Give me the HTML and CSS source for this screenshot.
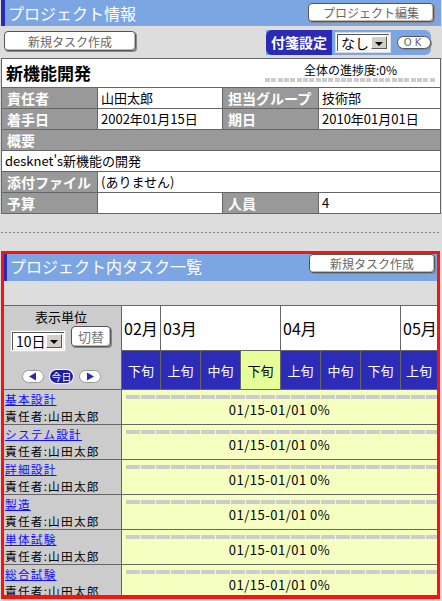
FILE: index.html
```html
<!DOCTYPE html>
<html lang="ja">
<head>
<meta charset="utf-8">
<title>プロジェクト情報</title>
<link rel="stylesheet" href="styles.css">
</head>
<body>
<div class="page">
  <div class="bar">
    <h1 class="bar-title">プロジェクト情報</h1>
    <button class="btn btn-head">プロジェクト編集</button>
  </div>
  <div class="toolbar">
    <button class="btn btn-new">新規タスク作成</button>
    <div class="sticky">
      <span class="sticky-label">付箋設定</span>
      <span class="select select-sticky"><span class="select-text">なし</span><span class="select-arrow"></span></span>
      <button class="btn-ok">OK</button>
    </div>
  </div>
  <div class="info">
    <div class="info-title">
      <span class="project-name">新機能開発</span>
      <div class="progress">
        <span class="progress-text">全体の進捗度:0%</span>
        <span class="progress-bar"></span>
      </div>
    </div>
    <div class="label">責任者</div><div class="value">山田太郎</div>
    <div class="label">担当グループ</div><div class="value">技術部</div>
    <div class="label">着手日</div><div class="value">2002年01月15日</div>
    <div class="label">期日</div><div class="value">2010年01月01日</div>
    <div class="label full">概要</div>
    <div class="value full">desknet's新機能の開発</div>
    <div class="label">添付ファイル</div><div class="value wide">(ありません)</div>
    <div class="label">予算</div><div class="value"></div>
    <div class="label">人員</div><div class="value">4</div>
  </div>
  <div class="divider"></div>
  <section class="tasks">
    <div class="bar bar-tasks">
      <h2 class="bar-title">プロジェクト内タスク一覧</h2>
      <button class="btn btn-head btn-head-tasks">新規タスク作成</button>
    </div>
    <div class="tasks-gap"></div>
    <div class="gantt">
      <div class="unit-cell">
        <div class="unit-label">表示単位</div>
        <div class="unit-controls">
          <span class="select select-unit"><span class="select-text">10日</span><span class="select-arrow"></span></span>
          <button class="btn btn-switch">切替</button>
        </div>
        <div class="nav">
          <span class="nav-btn"><svg width="22" height="13" viewBox="0 0 22 13"><rect x="0.5" y="0.5" width="21" height="12" rx="6" fill="#fff" stroke="#999"/><polygon points="7,6.5 14,2.5 14,10.5" fill="#2a2ab4"/></svg></span>
          <span class="nav-today">今日</span>
          <span class="nav-btn"><svg width="22" height="13" viewBox="0 0 22 13"><rect x="0.5" y="0.5" width="21" height="12" rx="6" fill="#fff" stroke="#999"/><polygon points="15,6.5 8,2.5 8,10.5" fill="#2a2ab4"/></svg></span>
        </div>
      </div>
      <div class="month m-feb">02月</div>
      <div class="month m-mar">03月</div>
      <div class="month m-apr">04月</div>
      <div class="month m-may">05月</div>
      <div class="dec">下旬</div>
      <div class="dec">上旬</div>
      <div class="dec">中旬</div>
      <div class="dec dec-now">下旬</div>
      <div class="dec">上旬</div>
      <div class="dec">中旬</div>
      <div class="dec">下旬</div>
      <div class="dec">上旬</div>

      <div class="task-name"><a href="#">基本設計</a><span>責任者:山田太郎</span></div>
      <div class="task-bar"><span class="dashes"></span><span class="task-date">01/15-01/01 0%</span></div>
      <div class="task-name"><a href="#">システム設計</a><span>責任者:山田太郎</span></div>
      <div class="task-bar"><span class="dashes"></span><span class="task-date">01/15-01/01 0%</span></div>
      <div class="task-name"><a href="#">詳細設計</a><span>責任者:山田太郎</span></div>
      <div class="task-bar"><span class="dashes"></span><span class="task-date">01/15-01/01 0%</span></div>
      <div class="task-name"><a href="#">製造</a><span>責任者:山田太郎</span></div>
      <div class="task-bar"><span class="dashes"></span><span class="task-date">01/15-01/01 0%</span></div>
      <div class="task-name"><a href="#">単体試験</a><span>責任者:山田太郎</span></div>
      <div class="task-bar"><span class="dashes"></span><span class="task-date">01/15-01/01 0%</span></div>
      <div class="task-name"><a href="#">総合試験</a><span>責任者:山田太郎</span></div>
      <div class="task-bar"><span class="dashes"></span><span class="task-date">01/15-01/01 0%</span></div>
    </div>
  </section>
</div>
</body>
</html>
```

FILE: styles.css
```css
* { box-sizing: border-box; }

body {
  margin: 0;
  background: #dddddd;
  font-family: "Noto Sans CJK JP", "DejaVu Sans", sans-serif;
  font-size: 13px;
  color: #000;
}

.page {
  width: 442px;
  padding: 0 1px;
}

/* header bars */
.bar {
  display: flex;
  justify-content: space-between;
  align-items: flex-start;
  height: 26px;
  background: #7ba6e3;
  border-left: 4px solid #2a2ab4;
  padding-right: 7px;
}

.bar-title {
  margin: 0;
  padding-left: 3px;
  font-size: 16px;
  font-weight: normal;
  color: #fff;
  line-height: 26px;
}

.btn {
  background: #fff;
  border: 1px solid #555;
  border-radius: 4px;
  box-shadow: 1px 1px 0 #888, inset -1px -1px 0 #bbb;
  font-family: inherit;
  font-size: 12px;
  color: #666;
  padding: 0;
  line-height: 17px;
}

.btn-head {
  margin-top: 3px;
  width: 126px;
  height: 19px;
}

/* toolbar */
.toolbar {
  display: flex;
  justify-content: space-between;
  align-items: flex-start;
  height: 32px;
}

.btn-new {
  margin-top: 5px;
  margin-left: 3px;
  width: 132px;
  height: 20px;
}

.sticky {
  display: flex;
  align-items: center;
  margin-top: 4px;
  margin-right: 10px;
  height: 25px;
  background: #7ba6e3;
  border-radius: 0 6px 6px 0;
}

.sticky-label {
  width: 66px;
  height: 25px;
  background: #2a2ab4;
  color: #fff;
  font-weight: bold;
  font-size: 14px;
  line-height: 25px;
  text-align: center;
  border-radius: 6px 0 0 6px;
}

.select {
  display: flex;
  align-items: stretch;
  background: #fff;
  border: 1px solid #fff;
  outline: 1px solid #d8d8d8;
  box-shadow: inset 1px 1px 0 #555, inset -1px -1px 0 #eee;
  padding: 2px;
}

.select-text {
  flex: 1;
  padding-left: 2px;
  line-height: 14px;
}

.select-arrow {
  width: 16px;
  background: #d4d0c8;
  border: 1px solid;
  border-color: #fff #555 #555 #fff;
  position: relative;
}

.select-arrow::after {
  content: "";
  position: absolute;
  left: 3px;
  top: 5px;
  border-left: 4px solid transparent;
  border-right: 4px solid transparent;
  border-top: 4px solid #000;
}

.select-sticky {
  margin-left: 4px;
  width: 54px;
  height: 19px;
  font-size: 14px;
}

.btn-ok {
  margin-left: 7px;
  width: 34px;
  height: 13px;
  padding: 0;
  background: #fff;
  border: 1px solid #555;
  border-radius: 7px;
  box-shadow: 1px 1px 0 #888;
  font-family: "DejaVu Sans", sans-serif;
  font-size: 10px;
  line-height: 11px;
  letter-spacing: 3px;
  color: #666;
}

/* info table */
.info {
  display: grid;
  grid-template-columns: 95px 124px 95px 121px;
  grid-template-rows: 28px;
  grid-auto-rows: 20px;
  gap: 1px;
  background: #666;
  border: 1px solid #666;
}

.info-title {
  grid-column: 1 / -1;
  display: flex;
  justify-content: space-between;
  background: #fff;
  padding-left: 4px;
}

.project-name {
  font-size: 17px;
  font-weight: bold;
  line-height: 28px;
}

.progress {
  width: 171px;
  margin-right: 4px;
  display: flex;
  flex-direction: column;
  align-items: center;
}

.progress-text {
  margin-top: 4px;
  font-size: 12px;
  line-height: 14px;
}

.progress-bar {
  display: block;
  width: 100%;
  height: 4px;
  margin-top: 1px;
  background: repeating-linear-gradient(90deg, #cccccc 0 5px, transparent 5px 6.33px);
}

.label {
  background: #999;
  color: #fff;
  font-weight: bold;
  font-size: 14px;
  line-height: 20px;
  padding-left: 5px;
}

.value {
  background: #fff;
  padding-left: 3px;
  line-height: 20px;
}

.full { grid-column: 1 / -1; }
.wide { grid-column: 2 / -1; }

.divider {
  margin-top: 18px;
  height: 1px;
  background: repeating-linear-gradient(90deg, #888 0 2px, transparent 2px 4px);
}

/* tasks section */
.tasks {
  margin-top: 18px;
  width: 439px;
  height: 348px;
  border: 3px solid #ff1010;
  border-bottom-width: 4px;
  overflow: hidden;
}

.bar-tasks {
  height: 27px;
  border-left-width: 3px;
  padding-right: 2px;
}

.bar-tasks .bar-title {
  line-height: 25px;
}

.btn-head-tasks {
  margin-top: 0;
}

.tasks-gap {
  height: 24px;
}

.gantt {
  display: grid;
  grid-template-columns: 117px 38px repeat(6, 39px) 36px;
  grid-template-rows: 44px 38px;
  grid-auto-rows: 34px;
  gap: 1px;
  background: #666;
  border-top: 1px solid #666;
}

.unit-cell {
  grid-row: 1 / span 2;
  background: #ccc;
  display: flex;
  flex-direction: column;
}

.unit-label {
  margin-top: 3px;
  text-align: center;
  line-height: 16px;
  padding-right: 3px;
}

.unit-controls {
  display: flex;
  align-items: flex-start;
  padding-left: 7px;
}

.select-unit {
  margin-top: 6px;
  width: 54px;
  height: 20px;
  font-size: 14px;
}

.btn-switch {
  margin-left: 6px;
  margin-top: 1px;
  width: 40px;
  height: 21px;
  font-size: 13px;
  color: #777;
}

.nav {
  display: flex;
  gap: 6px;
  margin-top: 19px;
  padding-left: 18px;
}

.nav-btn svg { display: block; }

.nav-today {
  width: 23px;
  height: 13px;
  border-radius: 7px;
  background: #1e1ea8;
  color: #fff;
  font-size: 10px;
  line-height: 13px;
  text-align: center;
  box-shadow: 0 0 0 1px #fff;
}

.month {
  background: #fff;
  font-size: 16px;
  display: flex;
  align-items: center;
  padding-left: 2px;
}

.m-feb { grid-column: 2; }
.m-mar { grid-column: 3 / 6; }
.m-apr { grid-column: 6 / 9; }
.m-may { grid-column: 9; }

.dec {
  background: #2c2cb8;
  color: #fff;
  display: flex;
  align-items: center;
  justify-content: center;
}

.dec-now {
  background: #e6ff99;
  color: #000;
}

.task-name {
  grid-column: 1;
  background: #ccc;
  padding: 0 0 0 1px;
  display: flex;
  flex-direction: column;
  font-size: 11.7px;
  line-height: 17px;
  letter-spacing: 1.2px;
}

.task-name a {
  color: #1010ff;
  text-decoration: underline;
}

.task-bar {
  grid-column: 2 / -1;
  background: #f5ffc0;
  display: flex;
  flex-direction: column;
  align-items: center;
}

.dashes {
  display: block;
  align-self: stretch;
  height: 4px;
  margin: 5px 0 0 4px;
  background: repeating-linear-gradient(90deg, #cccccc 0 14px, transparent 14px 15px);
}

.task-date {
  margin-top: 3px;
  line-height: 16px;
  letter-spacing: 0.5px;
}
```
